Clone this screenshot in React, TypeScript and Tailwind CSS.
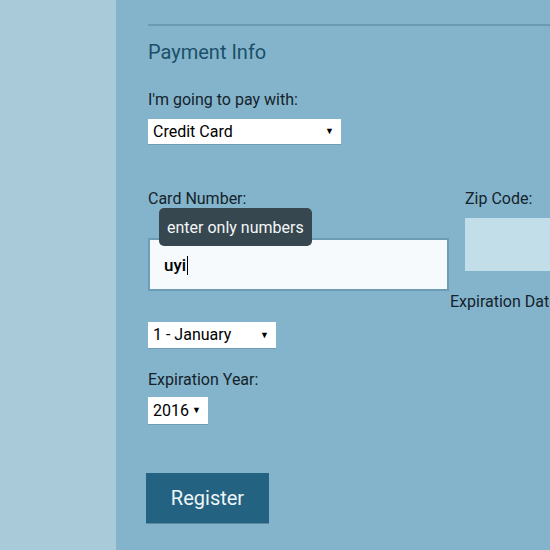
import type { ReactNode } from "react";

function FakeSelect({ width, height, children }: { width: string; height: string; children: ReactNode }) {
  return (
    <div
      className={`flex items-center justify-between bg-white pl-[5px] pr-[7px] text-[16px] leading-none text-black shadow-[0_1px_0_#6d9cb5] ${width} ${height}`}
    >
      <span>{children}</span>
      <span className="text-[9px]">▼</span>
    </div>
  );
}

export default function App() {
  return (
    <div className="flex h-[550px] w-[550px] overflow-hidden font-['Roboto',sans-serif] text-[#14232b]">
      <aside className="w-[116px] shrink-0 bg-[#a8cad9]" />

      <main className="flex-1 bg-[#84b4cb] pl-[32px] pt-[24px]">
        <div className="w-[500px] border-t-2 border-[#6a9bb3]" />

        <h2 className="mt-[12px] text-[20px] leading-[28px] text-[#1b5069]">Payment Info</h2>

        <p className="mt-[23px] text-[16px] leading-[22px]">I'm going to pay with:</p>
        <div className="mt-[8px]">
          <FakeSelect width="w-[193px]" height="h-[25px]">Credit Card</FakeSelect>
        </div>

        <div className="mt-[44px] flex w-[560px] items-start">
          <div className="w-[301px] shrink-0">
            <p className="text-[16px] leading-[22px]">Card Number:</p>
            <div className="relative mt-[28px]">
              <div className="absolute left-[11px] top-[-30px] z-10 rounded-[5px] bg-[#37474f] px-[8px] pb-[6px] pt-[8px] text-[16px] leading-[24px] text-[#f3f6f7]">
                enter only numbers
              </div>
              <div className="flex h-[53px] items-center border-2 border-[#6d9cb5] bg-[#f6fafd] pl-[14px] pt-[2px] text-[17px] font-medium text-black">
                uyi<span className="ml-[1px] h-[19px] w-px bg-black" />
              </div>
            </div>
          </div>

          <div className="ml-[16px] w-[200px] shrink-0">
            <p className="text-[16px] leading-[22px]">Zip Code:</p>
            <div className="mt-[8px] h-[53px] bg-[#c1dee9]" />
          </div>
        </div>

        <p className="ml-[302px] mt-[0px] w-[200px] whitespace-nowrap text-[16px] leading-[22px]">Expiration Date</p>

        <div className="mt-[9px]">
          <FakeSelect width="w-[128px]" height="h-[26px]">1 - January</FakeSelect>
        </div>

        <p className="mt-[21px] text-[16px] leading-[22px]">Expiration Year:</p>
        <div className="mt-[6px]">
          <FakeSelect width="w-[60px]" height="h-[27px]">2016</FakeSelect>
        </div>

        <button className="ml-[-2px] mt-[49px] h-[50px] w-[123px] bg-[#236381] text-[20px] text-[#eef4f7] shadow-[0_1px_0_#5d8aa0]">
          Register
        </button>
      </main>
    </div>
  );
}
